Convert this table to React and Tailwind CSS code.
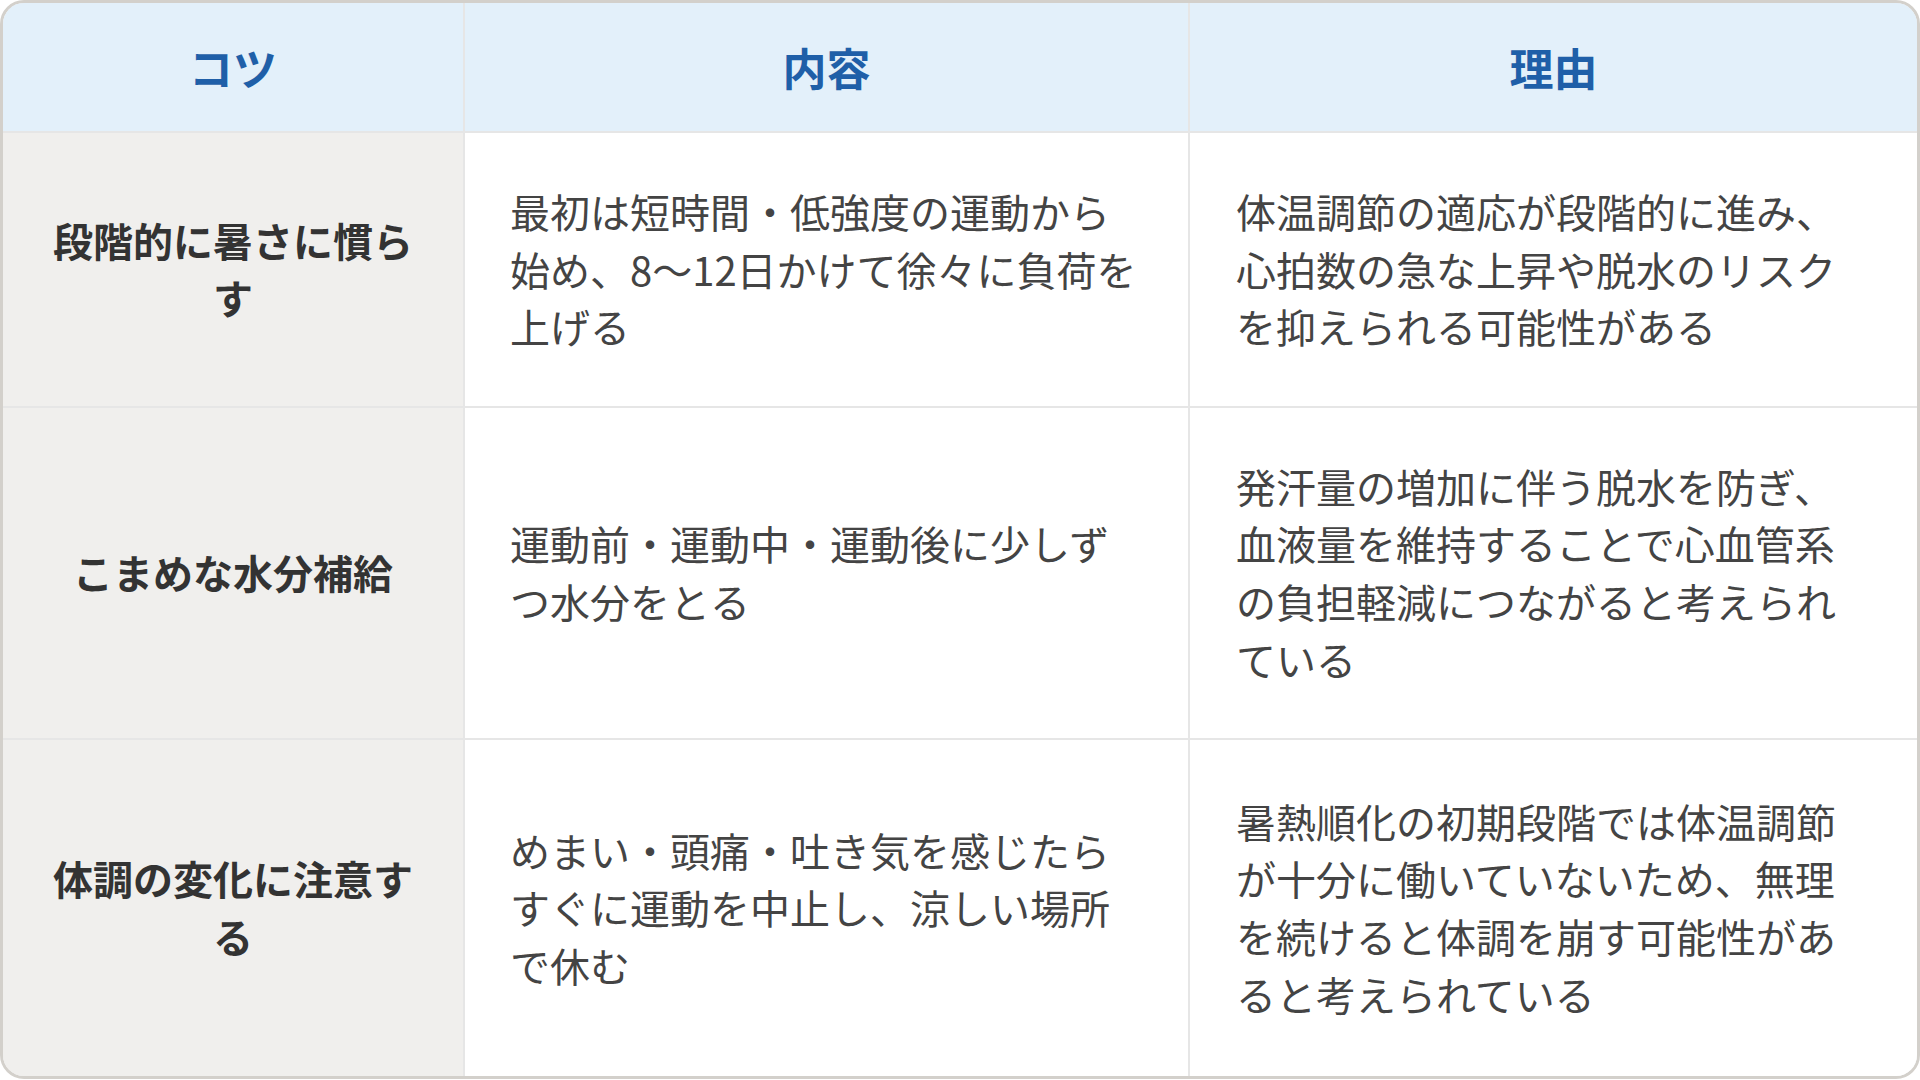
const ROWS = [
  {
    tip: "段階的に暑さに慣らす",
    what: "最初は短時間・低強度の運動から始め、8〜12日かけて徐々に負荷を上げる",
    why: "体温調節の適応が段階的に進み、心拍数の急な上昇や脱水のリスクを抑えられる可能性がある",
  },
  {
    tip: "こまめな水分補給",
    what: "運動前・運動中・運動後に少しずつ水分をとる",
    why: "発汗量の増加に伴う脱水を防ぎ、血液量を維持することで心血管系の負担軽減につながると考えられている",
  },
  {
    tip: "体調の変化に注意する",
    what: "めまい・頭痛・吐き気を感じたらすぐに運動を中止し、涼しい場所で休む",
    why: "暑熱順化の初期段階では体温調節が十分に働いていないため、無理を続けると体調を崩す可能性があると考えられている",
  },
];

const HEADERS = ["コツ", "内容", "理由"];

export default function App() {
  return (
    <div
      className="w-[1920px] h-[1080px] bg-white"
      style={{ fontFamily: '"Noto Sans CJK JP", "Noto Sans", sans-serif' }}
    >
      <div className="h-[1079px] rounded-[24px] border-[3px] border-[#d3d0cb] overflow-hidden">
        <div className="h-full grid grid-cols-[460px_723px_1fr] grid-rows-[auto_auto_auto_1fr] gap-[2px] bg-[#e6e6e6]">
          {HEADERS.map((h) => (
            <div
              key={h}
              className="bg-[#e3f0fa] py-[31px] text-center text-[44px] leading-[66px] font-bold text-[#1f5fa8]"
            >
              {h}
            </div>
          ))}

          {ROWS.map((r) => (
            <div key={r.tip} className="contents">
              <div className="bg-[#f0efed] px-12 py-[50px] flex items-center justify-center text-center text-[40px] leading-[57.6px] font-bold text-[#333333]">
                {r.tip}
              </div>
              <div className="bg-white pl-[45px] pr-[40px] py-[50px] flex items-center text-[40px] leading-[57.6px] text-[#444444]">
                <p>{r.what}</p>
              </div>
              <div className="bg-white pl-[46px] pr-[44px] py-[50px] flex items-center text-[40px] leading-[57.6px] text-[#444444]">
                <p>{r.why}</p>
              </div>
            </div>
          ))}
        </div>
      </div>
    </div>
  );
}
